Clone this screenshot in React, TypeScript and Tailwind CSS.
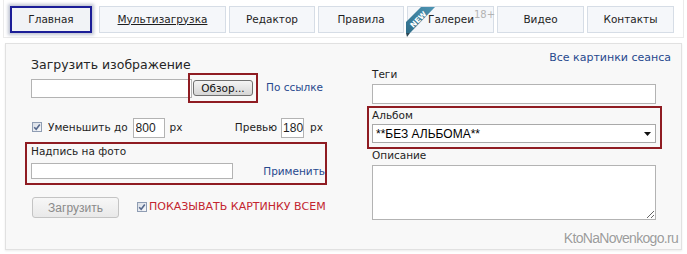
import React from 'react';

const sans = "font-['DejaVu_Sans',Verdana,sans-serif]";
const arial = "font-['Liberation_Sans',Arial,sans-serif]";

const tabs = [
  { label: 'Главная', w: 'w-[82px]', active: true },
  { label: 'Мультизагрузка', w: 'w-[127px]', underline: true },
  { label: 'Редактор', w: 'w-[86px]' },
  { label: 'Правила', w: 'w-[86px]' },
  { label: 'Галереи', w: 'w-[87px]', isNew: true },
  { label: 'Видео', w: 'w-[87px]' },
  { label: 'Контакты', w: 'w-[87px]' },
];

const Check = () => (
  <span className="inline-flex h-[10px] w-[10px] shrink-0 items-center justify-center border border-[#8f9db3] bg-linear-to-br from-[#d9dee6] to-[#f7f8fa]">
    <svg width="8" height="8" viewBox="0 0 8 8">
      <path d="M1.2 4.2 L3.2 6.3 L6.8 1.6" stroke="#56698d" strokeWidth="1.6" fill="none" />
    </svg>
  </span>
);

const NewRibbon = () => (
  <svg className="absolute -left-[4px] top-0" width="36" height="31" viewBox="0 0 36 31">
    <defs>
      <linearGradient id="rib" x1="0" y1="1" x2="1" y2="0">
        <stop offset="0" stopColor="#2f6d88" />
        <stop offset="1" stopColor="#4d94b3" />
      </linearGradient>
    </defs>
    <polygon points="17,0 31,0 6,26 2,26 2,15" fill="url(#rib)" />
    <polygon points="2,26 6,26 3,30" fill="#2b4654" />
    <text
      x="14.5"
      y="15"
      fill="#ffffff"
      fontSize="7.5"
      fontWeight="bold"
      fontFamily="DejaVu Sans, sans-serif"
      textAnchor="middle"
      transform="rotate(-45 14.5 12.5)"
    >
      NEW
    </text>
  </svg>
);

const App = () => {
  return (
    <div className={`h-[254px] w-[687px] overflow-hidden bg-white ${sans} text-[10.5px] text-[#1e1e1e]`}>
      {/* tab bar */}
      <div className="mx-[3px] h-[38px] border-x border-b border-[#ebebeb] pl-[6px] pt-[6px]">
        <div className="flex gap-[3px]">
          {tabs.map((t) => (
            <div
              key={t.label}
              className={`relative flex h-[27px] ${t.w} items-center ${
                t.active
                  ? 'mr-[4px] border-2 border-[#1b1d97] bg-[#f1f3f6] shadow-[0_0_3px_2px_rgba(140,150,175,0.55)]'
                  : 'border border-[#d6dde6] bg-[#f5f7fa]'
              } ${t.isNew ? 'pl-[20px]' : 'justify-center'}`}
            >
              {t.isNew && <NewRibbon />}
              <span className={t.underline ? 'underline' : ''}>{t.label}</span>
              {t.isNew && <span className="relative -top-[5px] text-[10px] text-[#b3b3b3]">18+</span>}
            </div>
          ))}
        </div>
      </div>

      {/* upload panel */}
      <div className="relative mx-[5px] mt-[5px] flex h-[207px] border border-[#e1e1e1] bg-[#f8f8f8] shadow-[0_1px_2px_rgba(0,0,0,0.08)]">
        <div className="ml-[19px] w-[302px]">
          <h2 className="mt-[13px] pl-[6px] text-[12.5px] leading-[16px] text-[#262626]">Загрузить изображение</h2>

          <div className="flex h-[30px] items-center">
            <input readOnly className="ml-[6px] h-[19px] w-[161px] border border-[#b3b3b3] bg-white" />
            <div className="ml-[-4px] flex h-[30px] w-[70px] items-center justify-center border-2 border-[#8f1c22]">
              <button className="h-[16px] w-[60px] rounded-[3px] border border-[#707070] bg-linear-to-b from-[#f4f4f4] to-[#d6d6d6] text-[10.5px] leading-[14px] text-[#111]">
                Обзор...
              </button>
            </div>
            <a className="ml-[8px] text-[#27498e]">По ссылке</a>
          </div>

          <div className="mt-[15px] flex h-[20px] items-center pr-[4px]">
            <span className="ml-[7px]">
              <Check />
            </span>
            <span className="ml-[6px]">Уменьшить до</span>
            <input
              readOnly
              defaultValue="800"
              className={`ml-[5px] h-[20px] w-[32px] border border-[#b3b3b3] bg-white pl-[2px] ${arial} text-[12px]`}
            />
            <span className="ml-[5px]">px</span>
            <span className="ml-auto">Превью</span>
            <input
              readOnly
              defaultValue="180"
              className={`ml-[4px] h-[20px] w-[23px] border border-[#b3b3b3] bg-white pl-[1px] ${arial} text-[12px]`}
            />
            <span className="ml-[6px]">px</span>
          </div>

          <div className="mt-[4px] h-[43px] border-2 border-[#8f1c22] pl-[4px]">
            <div className="leading-[14px]">Надпись на фото</div>
            <div className="mt-[4px] flex items-center justify-between">
              <input readOnly className="h-[16px] w-[202px] border border-[#b3b3b3] bg-white" />
              <a className="mt-[2px] text-[#27498e]">Применить</a>
            </div>
          </div>

          <div className="mt-[12px] flex h-[21px] items-center">
            <button
              className={`ml-[7px] h-[21px] w-[87px] rounded-[3px] border border-[#c4c4c4] bg-linear-to-b from-[#f7f7f7] to-[#e9e9e9] ${arial} text-[12px] text-[#8a8a8a]`}
            >
              Загрузить
            </button>
            <span className="ml-[18px]">
              <Check />
            </span>
            <span className="ml-[2px] text-[11px] text-[#c3252f]">ПОКАЗЫВАТЬ КАРТИНКУ ВСЕМ</span>
          </div>
        </div>

        <div className="ml-[40px] w-[304px]">
          <div className="mt-[6px] text-right leading-[14px]">
            <a className="text-[11px] text-[#27498e]">Все картинки сеанса</a>
          </div>
          <div className="mt-[2px] pl-[5px] leading-[14px]">Теги</div>
          <input readOnly className="ml-[5px] mt-[3px] block h-[20px] w-[284px] border border-[#b3b3b3] bg-white" />

          <div className="mt-[2px] h-[43px] w-[295px] border-2 border-[#8f1c22] pl-[3px]">
            <div className="leading-[14px]">Альбом</div>
            <div className="mt-[2px] flex h-[19px] w-[284px] items-center border border-[#a9a9a9] bg-white pl-[3px] pr-[4px]">
              <span className={`${arial} text-[12px] text-black`}>**БЕЗ АЛЬБОМА**</span>
              <svg className="ml-auto" width="7" height="4" viewBox="0 0 7 4">
                <polygon points="0,0 7,0 3.5,4" fill="#111" />
              </svg>
            </div>
          </div>

          <div className="pl-[5px] leading-[12px]">Описание</div>
          <textarea readOnly className="ml-[5px] mt-[4px] block h-[55px] w-[284px] border border-[#b3b3b3] bg-white" />
        </div>

        <div
          className={`absolute bottom-[1px] right-[3px] ${arial} text-[14px] leading-[20px] tracking-[-0.05em] text-[#9c9c9c] [text-shadow:0_0_3px_#ffffff,0_0_2px_#ffffff]`}
        >
          KtoNaNovenkogo.ru
        </div>
      </div>
    </div>
  );
};

export default App;
